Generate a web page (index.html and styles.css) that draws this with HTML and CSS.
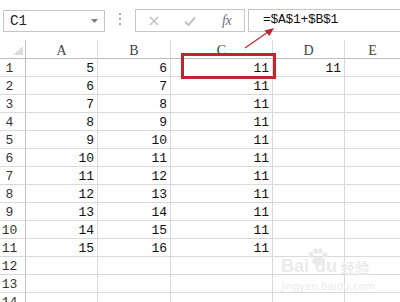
FILE: index.html
```html
<!DOCTYPE html>
<html>
<head>
<meta charset="utf-8">
<link rel="stylesheet" href="styles.css">
</head>
<body>
<div class="app">
  <div class="toolbar">
    <div class="namebox">
      <span class="nb-text">C1</span>
      <svg class="nb-arrow" width="7" height="4" viewBox="0 0 7 4"><path d="M0 0H7L3.5 4Z" fill="#7a7a7a"/></svg>
    </div>
    <svg class="dots" width="4" height="14" viewBox="0 0 4 14"><rect x="1" y="1" width="2" height="2" fill="#a8a8a8"/><rect x="1" y="6" width="2" height="2" fill="#a8a8a8"/><rect x="1" y="11" width="2" height="2" fill="#a8a8a8"/></svg>
    <div class="fxbox">
      <svg class="ico-x" width="10" height="10" viewBox="0 0 10 10"><path d="M1 1L9 9M9 1L1 9" stroke="#bdbdbd" stroke-width="1.4" fill="none"/></svg>
      <svg class="ico-ok" width="12" height="10" viewBox="0 0 12 10"><path d="M1 5.5L4.5 9L11 1.5" stroke="#c4c4c4" stroke-width="2" fill="none"/></svg>
      <span class="fx">fx</span>
    </div>
    <div class="formula">=$A$1+$B$1</div>
  </div>

  <div class="sheet">
    <div class="hd corner"><svg width="10" height="9" viewBox="0 0 10 9"><path d="M10 0V9H0Z" fill="#dedede"/></svg></div>
    <div class="hd col">A</div>
    <div class="hd col">B</div>
    <div class="hd col">C</div>
    <div class="hd col">D</div>
    <div class="hd col last">E</div>

    <div class="rh">1</div><div class="c">5</div><div class="c">6</div><div class="c">11</div><div class="c">11</div><div class="c last"></div>
    <div class="rh">2</div><div class="c">6</div><div class="c">7</div><div class="c">11</div><div class="c"></div><div class="c last"></div>
    <div class="rh">3</div><div class="c">7</div><div class="c">8</div><div class="c">11</div><div class="c"></div><div class="c last"></div>
    <div class="rh">4</div><div class="c">8</div><div class="c">9</div><div class="c">11</div><div class="c"></div><div class="c last"></div>
    <div class="rh">5</div><div class="c">9</div><div class="c">10</div><div class="c">11</div><div class="c"></div><div class="c last"></div>
    <div class="rh">6</div><div class="c">10</div><div class="c">11</div><div class="c">11</div><div class="c"></div><div class="c last"></div>
    <div class="rh">7</div><div class="c">11</div><div class="c">12</div><div class="c">11</div><div class="c"></div><div class="c last"></div>
    <div class="rh">8</div><div class="c">12</div><div class="c">13</div><div class="c">11</div><div class="c"></div><div class="c last"></div>
    <div class="rh">9</div><div class="c">13</div><div class="c">14</div><div class="c">11</div><div class="c"></div><div class="c last"></div>
    <div class="rh">10</div><div class="c">14</div><div class="c">15</div><div class="c">11</div><div class="c"></div><div class="c last"></div>
    <div class="rh">11</div><div class="c">15</div><div class="c">16</div><div class="c">11</div><div class="c"></div><div class="c last"></div>
    <div class="rh">12</div><div class="c"></div><div class="c"></div><div class="c"></div><div class="c"></div><div class="c last"></div>
    <div class="rh">13</div><div class="c"></div><div class="c"></div><div class="c"></div><div class="c"></div><div class="c last"></div>
    <div class="rh">14</div><div class="c"></div><div class="c"></div><div class="c"></div><div class="c"></div><div class="c last"></div>
  </div>

  <div class="highlight"></div>
  <svg class="arrow" width="400" height="60" viewBox="0 0 400 60">
    <path d="M245 48L268 32" stroke="#c0272d" stroke-width="1.2" fill="none"/>
    <path d="M274 28L264.5 30.5L269.5 36Z" fill="#c0272d"/>
  </svg>

  <div class="watermark">
    <div class="wm-top">
      <span class="wm-bai">Bai</span>
      <svg class="wm-paw" width="22" height="18" viewBox="0 0 22 18">
        <ellipse cx="11" cy="13" rx="6" ry="4.5" fill="#eaeaea"/>
        <ellipse cx="4" cy="7" rx="2.5" ry="3" fill="#eaeaea"/>
        <ellipse cx="8.5" cy="3" rx="2.3" ry="2.8" fill="#eaeaea"/>
        <ellipse cx="13.5" cy="3" rx="2.3" ry="2.8" fill="#eaeaea"/>
        <ellipse cx="18" cy="7" rx="2.5" ry="3" fill="#eaeaea"/>
      </svg>
      <span class="wm-du">du</span><span class="wm-jy">经验</span>
    </div>
    <div class="wm-url">jingyan.baidu.com</div>
  </div>
</div>
</body>
</html>
```

FILE: styles.css
```css
html, body {
  margin: 0;
  padding: 0;
  background: #ffffff;
  overflow: hidden;
}

.app {
  position: relative;
  width: 400px;
  height: 302px;
  overflow: hidden;
  font-family: "Liberation Mono", "DejaVu Sans Mono", monospace;
  font-size: 13px;
  color: #111;
}

.toolbar {
  display: flex;
  align-items: flex-start;
  height: 40px;
  padding-top: 9px;
  box-sizing: border-box;
}

.namebox {
  box-sizing: border-box;
  margin-left: 3px;
  margin-top: 1px;
  width: 102px;
  height: 22px;
  border: 1px solid #c6c6c6;
  display: flex;
  align-items: center;
  padding-left: 6px;
  padding-right: 6px;
}

.nb-text {
  flex: 1;
  color: #222;
  font-size: 14px;
}

.nb-arrow {
  display: block;
}

.dots {
  display: block;
  margin-left: 13px;
  margin-top: 3px;
}

.fxbox {
  box-sizing: border-box;
  margin-left: 13px;
  width: 110px;
  height: 23px;
  border: 1px solid #c6c6c6;
  display: flex;
  align-items: center;
  padding-left: 13px;
}

.ico-x {
  display: block;
}

.ico-ok {
  display: block;
  margin-left: 25px;
}

.fx {
  margin-left: 26px;
  font-family: "Liberation Serif", serif;
  font-style: italic;
  font-size: 14px;
  color: #6e6e6e;
  letter-spacing: -0.5px;
}

.formula {
  box-sizing: border-box;
  margin-left: 3px;
  flex: 1;
  height: 23px;
  border: 1px solid #c6c6c6;
  border-right: none;
  padding-left: 14px;
  font-size: 13px;
  line-height: 20px;
  color: #111;
  letter-spacing: -0.3px;
}

.sheet {
  display: grid;
  grid-template-columns: 26px 72px 73px 102px 72px 1fr;
  grid-template-rows: 19px;
  grid-auto-rows: 18px;
}

.sheet > div {
  box-sizing: border-box;
  border-right: 1px solid #d9d9d9;
  border-bottom: 1px solid #d9d9d9;
}

.sheet > .last {
  border-right: none;
}

.hd {
  text-align: center;
  line-height: 21px;
  color: #444;
  border-bottom-color: #bdbdbd !important;
}

.hd.col {
  border-right-color: #dcdcdc;
  font-family: "Liberation Serif", serif;
  font-size: 14px;
}

.corner {
  display: flex;
  align-items: flex-end;
  justify-content: flex-start;
  padding-left: 13px;
  padding-bottom: 3px;
  border-right-color: #c2c2c2 !important;
}

.corner svg {
  display: block;
}

.rh {
  text-align: center;
  padding-right: 6px;
  line-height: 19px;
  color: #333;
  border-right-color: #c2c2c2 !important;
}

.c {
  text-align: right;
  padding-right: 3px;
  line-height: 19px;
  color: #111;
}

.highlight {
  position: absolute;
  left: 181px;
  top: 53px;
  width: 95px;
  height: 26px;
  box-sizing: border-box;
  border: 3px solid #c0272d;
}

.arrow {
  position: absolute;
  left: 0;
  top: 0;
}

.watermark {
  position: absolute;
  left: 281px;
  top: 248px;
  color: #ebebeb;
  font-family: "Liberation Sans", sans-serif;
}

.wm-top {
  display: flex;
  align-items: flex-end;
  height: 28px;
}

.wm-bai, .wm-du {
  font-size: 18px;
  font-weight: bold;
  line-height: 20px;
}

.wm-paw {
  display: block;
  align-self: flex-start;
  margin: 0 -14px 0 -2px;
}

.wm-jy {
  font-family: "Noto Sans CJK SC", sans-serif;
  font-size: 14px;
  font-weight: bold;
  line-height: 18px;
  margin-left: 4px;
}

.wm-url {
  font-size: 11px;
  line-height: 14px;
  margin-top: 3px;
  letter-spacing: 0.3px;
}
```
